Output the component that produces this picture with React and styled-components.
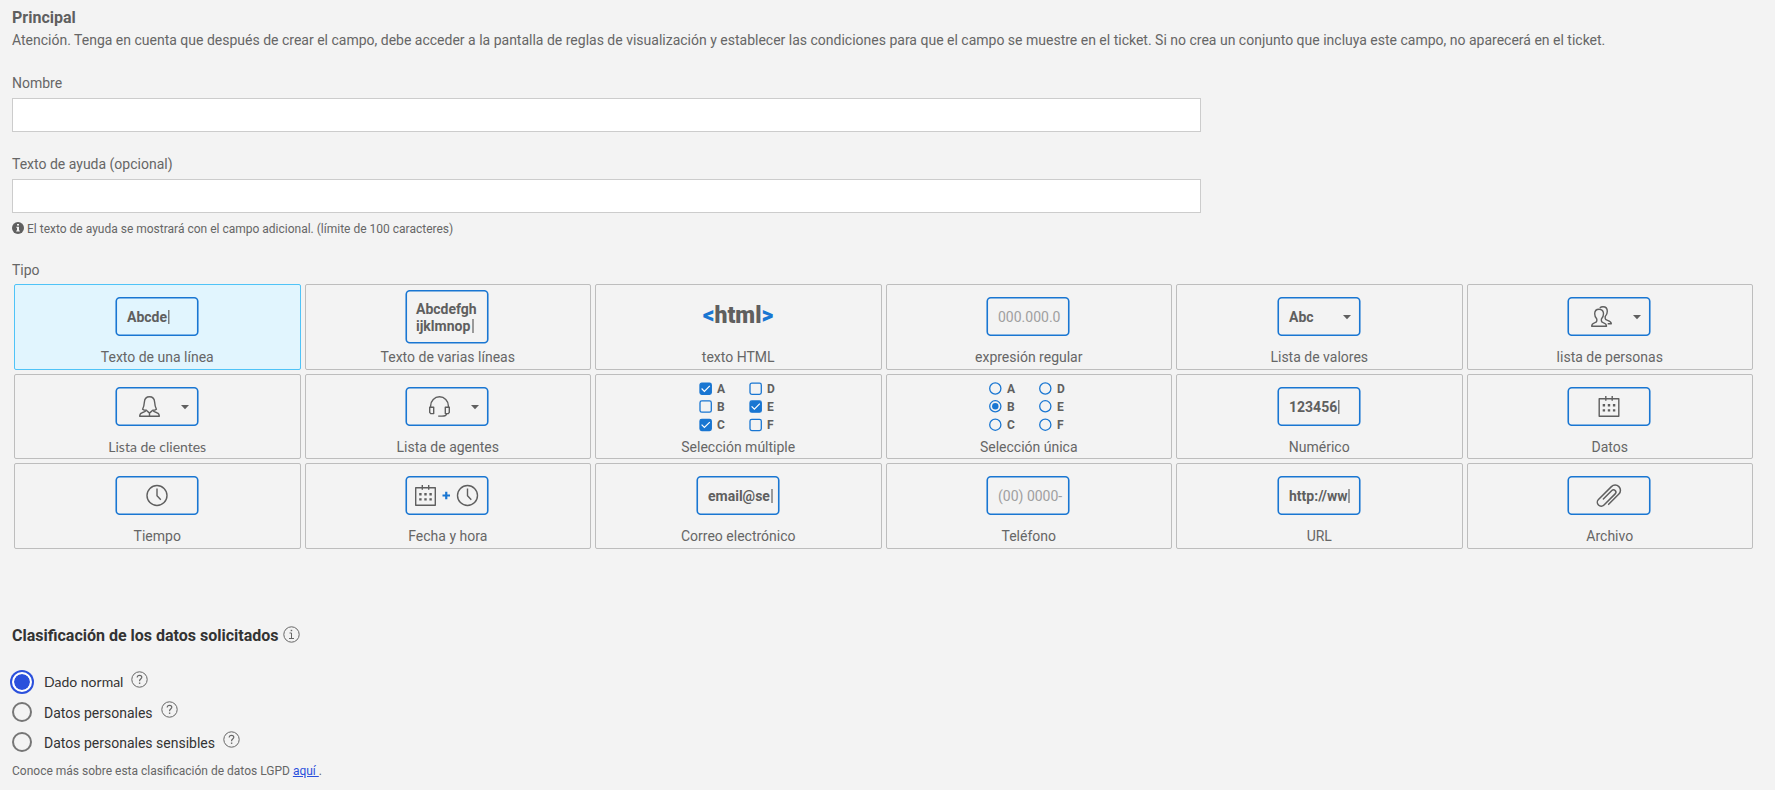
import React, { useState } from "react";
import styled, { createGlobalStyle, css } from "styled-components";

const BLUE = "#1976d2";
const INK = "#5f5f5f";

const GlobalStyle = createGlobalStyle`
  *, *::before, *::after { box-sizing: border-box; }
  body {
    margin: 0;
    background: #f3f3f3;
    color: #666;
    font: 14px/20px Roboto, "Liberation Sans", sans-serif;
  }
  svg { display: block; flex: none; }
`;

const Page = styled.form`
  padding: 8px 20px 10px 12px;
`;

const Heading = styled.h1`
  margin: 0 0 2px;
  font-size: 16px;
  line-height: 20px;
  font-weight: 700;
  color: #5f5f5f;
`;

const Intro = styled.p`
  margin: 0 0 23px;
`;

const Field = styled.div`
  display: flex;
  flex-direction: column;
  gap: 5px;
  margin-bottom: ${(p) => p.$gap}px;
`;

const TextInput = styled.input`
  width: 68.2%;
  height: 34px;
  padding: 6px 10px;
  border: 1px solid #ccc;
  background: #fff;
  color: #555;
  font: inherit;
`;

const Hint = styled.p`
  display: flex;
  align-items: flex-start;
  gap: 3px;
  margin: 0 0 23px;
  font-size: 12px;
  line-height: 16px;
  svg { margin-top: 1px; }
`;

const TypeSection = styled.section`
  margin-bottom: 75px;
`;

const TypeLabel = styled.h2`
  margin: 0 0 4px;
  font-size: 14px;
  line-height: 20px;
  font-weight: 400;
`;

const TypeGrid = styled.div`
  display: grid;
  grid-template-columns: repeat(6, 1fr);
  grid-auto-rows: 1fr;
  gap: 4px;
  min-height: 265px;
  padding: 0 2px;
`;

const TypeCard = styled.button`
  display: flex;
  flex-direction: column;
  align-items: center;
  gap: 3px;
  padding: 5px 0 0;
  border: 1px solid #bdbdbd;
  border-radius: 2px;
  background: transparent;
  color: inherit;
  font: inherit;
  cursor: pointer;
  ${(p) =>
    p.$selected &&
    css`
      border-color: #4fc3f7;
      background: #e1f5fe;
    `}
`;

const CardName = styled.span`
  ${(p) => p.$round && css`font-family: Lato, sans-serif;`}
`;

const Classification = styled.fieldset`
  margin: 0;
  padding: 0;
  border: 0;
  color: #333;
`;

const Legend = styled.legend`
  display: flex;
  align-items: flex-start;
  gap: 4px;
  margin-bottom: 22px;
  padding: 0;
  font-size: 16px;
  line-height: 24px;
  font-weight: 700;
  svg { margin-top: 2px; }
`;

const Options = styled.div`
  display: flex;
  flex-direction: column;
  gap: 6px;
  margin-bottom: 9px;
`;

const Option = styled.div`
  display: flex;
  align-items: center;
  height: 24px;
`;

const OptionLabel = styled.label`
  margin: ${(p) => (p.$round ? 0 : 2)}px 8px 0 12px;
  ${(p) => p.$round && css`font-family: Lato, sans-serif;`}
`;

const Radio = styled.input.attrs({ type: "radio" })`
  appearance: none;
  width: 20px;
  height: 20px;
  margin: 0;
  border: 2px solid #767676;
  border-radius: 50%;
  &:checked {
    border-color: #fff;
    background: #2b50dc padding-box;
    box-shadow: 0 0 0 2px #2b50dc;
  }
`;

const HelpButton = styled.button`
  margin: 0 0 5px;
  padding: 0;
  border: 0;
  background: none;
  color: #666;
`;

const Footnote = styled.p`
  margin: 0;
  font-size: 12px;
  line-height: 16px;
  color: #666;
  a { color: #2b50dc; white-space: pre; }
`;

const SvgText = styled.text`
  font: ${(p) => p.$weight || 700} ${(p) => p.$size || 14}px Roboto, sans-serif;
  fill: ${(p) => p.$fill || INK};
  white-space: pre;
`;

const Art = ({ children }) => (
  <svg width="85" height="54" viewBox="0 0 85 54" fill="none" aria-hidden="true">
    {children}
  </svg>
);

const Frame = ({ tall }) => (
  <rect x="1.25" y={tall ? 0.75 : 7.75} width="81.5" height={tall ? 52 : 37.5} rx="3.5" stroke={BLUE} strokeWidth="1.6" />
);

const Caret = ({ x, y = 20 }) => <path d={`M${x} ${y}v14`} stroke={INK} strokeWidth="1.2" />;

const Typed = ({ text, caret }) => (
  <Art>
    <Frame />
    <SvgText x="12" y="32">{text}</SvgText>
    {caret && <Caret x={caret} />}
  </Art>
);

const Masked = ({ text }) => (
  <Art>
    <Frame />
    <SvgText x="12" y="32" $weight={400} $fill="#a0a0a0">{text}</SvgText>
  </Art>
);

const DropArrow = () => <path d="M66 25h8l-4 4.2z" fill={INK} />;

const Stroke = ({ x, y = 16, children }) => (
  <g transform={`translate(${x} ${y})`} stroke={INK} strokeWidth="1.4" strokeLinejoin="round">
    {children}
  </g>
);

const Clock = ({ x }) => (
  <Stroke x={x}>
    <circle cx="10.5" cy="10.5" r="10" />
    <path d="M10.5 3.5v7.2l3.8 4" />
  </Stroke>
);

const Calendar = ({ x }) => (
  <Stroke x={x}>
    <path d="M.7 2.7h19.6v17.6H.7zM7.3 0v4.8M13.7 0v4.8" />
    <path d="M4.2 9.2h2.4M9.3 9.2h2.4M14.4 9.2h2.4M4.2 14.4h2.4M9.3 14.4h2.4M14.4 14.4h2.4" strokeWidth="2.4" />
  </Stroke>
);

const Person = ({ x }) => (
  <Stroke x={x}>
    <path d="M10.5.7C7 .7 5.6 3 5.4 6c-.2 3-.7 5-1.8 7.2.9.8 2.3 1.1 3.700 1.100-.5 1.300-2.200 1.800-4.400 2.500C1 17.400.7 18.300.7 20.300h19.600c0-2-.3-2.900-2.200-3.500-2.200-.7-3.900-1.200-4.400-2.500 1.400 0 2.800-.3 3.700-1.100C16.300 11 15.800 9 15.600 6 15.400 3 14 .7 10.500.7z" />
    <path d="M7.300 14.300l3.200 2.800 3.200-2.800M10.500 17v3.200" />
  </Stroke>
);

const People = ({ x }) => (
  <Stroke x={x}>
    <path d="M8 3.200c-3 0-4.300 1.900-4.300 4.600 0 2.500.8 4 2.100 5.300v2c0 1-.9 1.300-2.300 1.700C1.300 17.500.7 18 .7 20.300h14.800c0-2.300-.7-2.800-2.900-3.500-1.400-.4-2.200-.7-2.200-1.700v-2c1.300-1.300 2.100-2.800 2.100-5.300 0-2.700-1.300-4.600-4.500-4.600z" />
    <path d="M8.800 1.900C9.700 1 10.800.7 12 .7c3 0 4.300 1.900 4.300 4.600 0 2.500-.8 4-2.100 5.300v2c0 1 .9 1.300 2.300 1.700 2.300.7 3.800 1.200 3.800 3.400h-3.600" />
  </Stroke>
);

const Headset = ({ x }) => (
  <Stroke x={x}>
    <path d="M1.600 11.200V10a8.900 9.200 0 0 1 17.800 0v1.200" />
    <path d="M.7 11.200h4v6.400h-3l-1-1.200zM20.300 11.200h-4v6.400h3l1-1.200z" />
    <path d="M17.600 17.800c-.3 1.600-2 2.300-4.600 2.300H9.200" />
  </Stroke>
);

const Clip = () => (
  <g transform="translate(42.5 27) rotate(45)" stroke={INK} strokeWidth="1.5" strokeLinecap="round">
    <path d="M5.300 6.500V-8a5.300 5.300 0 0 0-10.600 0V10.300a3.900 3.900 0 0 0 7.800 0V-5.500a2.300 2.300 0 0 0-4.700 0V6.500" />
  </g>
);

const Picker = ({ children }) => (
  <Art>
    <Frame />
    {children}
    <DropArrow />
  </Art>
);

const CHOICES = [
  ["A", 3, 8.5], ["B", 3, 26.3], ["C", 3, 44.7],
  ["D", 53, 8.5], ["E", 53, 26.3], ["F", 53, 44.7],
];

const Choices = ({ round, on }) => (
  <Art>
    {CHOICES.map(([name, x, y]) => {
      const active = on.includes(name);
      return (
        <g key={name}>
          {round ? (
            <>
              <circle cx={x + 6.3} cy={y} r="5.6" stroke={BLUE} strokeWidth="1.3" />
              {active && <circle cx={x + 6.3} cy={y} r="3.2" fill={BLUE} />}
            </>
          ) : (
            <>
              <rect x={x + 1} y={y - 5.4} width="11.3" height="11.3" rx="1.8" stroke={BLUE} strokeWidth="1.3" fill={active ? BLUE : "none"} />
              {active && <path d={`M${x + 2.6} ${y}l2.8 2.8 5.400-5.400`} stroke="#fff" strokeWidth="1.2" />}
            </>
          )}
          <SvgText x={x + 18} y={y + 4.3} $size={12}>{name}</SvgText>
        </g>
      );
    })}
  </Art>
);

const TYPES = [
  { name: "Texto de una línea", art: <Typed text="Abcde" caret={53.8} /> },
  {
    name: "Texto de varias líneas",
    art: (
      <Art>
        <Frame tall />
        <SvgText x="11" y="24">Abcdefgh</SvgText>
        <SvgText x="11" y="41">ijklmnop</SvgText>
        <Caret x={68} y={29} />
      </Art>
    ),
  },
  {
    name: "texto HTML",
    art: (
      <Art>
        <SvgText x="42" y="33" $size={23} $weight={900} textAnchor="middle">
          <tspan fill={BLUE}>&lt;</tspan>html<tspan fill={BLUE}>&gt;</tspan>
        </SvgText>
      </Art>
    ),
  },
  { name: "expresión regular", art: <Masked text="000.000.0" /> },
  { name: "Lista de valores", art: <Picker><SvgText x="12" y="32">Abc</SvgText></Picker> },
  { name: "lista de personas", art: <Picker><People x={24} /></Picker> },
  { name: "Lista de clientes", round: true, art: <Picker><Person x={24} /></Picker> },
  { name: "Lista de agentes", art: <Picker><Headset x={24} /></Picker> },
  { name: "Selección múltiple", art: <Choices on="ACE" /> },
  { name: "Selección única", art: <Choices round on="B" /> },
  { name: "Numérico", art: <Typed text="123456" caret={61.8} /> },
  { name: "Datos", art: <Art><Frame /><Calendar x={31.5} /></Art> },
  { name: "Tiempo", art: <Art><Frame /><Clock x={31.5} /></Art> },
  {
    name: "Fecha y hora",
    art: (
      <Art>
        <Frame />
        <Calendar x={10} />
        <path d="M37.5 26.5h7.5M41.25 22.750v7.5" stroke={BLUE} strokeWidth="2.2" />
        <Clock x={52} />
      </Art>
    ),
  },
  { name: "Correo electrónico", art: <Typed text="email@se" caret={76} /> },
  { name: "Teléfono", art: <Masked text="(00) 0000-" /> },
  { name: "URL", art: <Typed text="http://ww" caret={72} /> },
  { name: "Archivo", art: <Art><Frame /><Clip /></Art> },
];

const OPTIONS = [
  { id: "normal", label: "Dado normal", round: true },
  { id: "personal", label: "Datos personales" },
  { id: "sensitive", label: "Datos personales sensibles" },
];

const InfoSolid = () => (
  <svg width="12" height="12" viewBox="0 0 12 12" aria-hidden="true">
    <circle cx="6" cy="6" r="6" fill={INK} />
    <path d="M5 2h2v1.600H5zM4.300 4.800H7v3.800h.8v1H4.200v-1H5V5.800h-.7z" fill="#f3f3f3" />
  </svg>
);

const InfoCircle = () => (
  <svg width="17" height="17" viewBox="0 0 17 17" fill="none" stroke="#666" aria-hidden="true">
    <circle cx="8.5" cy="8.5" r="7.7" />
    <path d="M6.500 7h2v5.500M6 12.500h5" />
    <path d="M7.700 4.500h1.500" strokeWidth="1.4" />
  </svg>
);

const HelpCircle = () => (
  <svg width="17" height="17" viewBox="0 0 17 17" fill="none" stroke="#666" aria-hidden="true">
    <circle cx="8.5" cy="8.5" r="7.7" />
    <path d="M6.200 6.600c0-1.500.9-2.300 2.300-2.300s2.300.8 2.300 2c0 1.700-2.200 1.800-2.200 3.500v.4" strokeWidth="1.2" />
    <path d="M7.900 12.200h1.400" strokeWidth="1.4" />
  </svg>
);

export default function App() {
  const [type, setType] = useState("Texto de una línea");
  const [level, setLevel] = useState("normal");
  return (
    <>
      <GlobalStyle />
      <Page onSubmit={(e) => e.preventDefault()}>
        <Heading>Principal</Heading>
        <Intro>
          Atención. Tenga en cuenta que después de crear el campo, debe acceder a la pantalla de reglas de visualización y
          establecer las condiciones para que el campo se muestre en el ticket. Si no crea un conjunto que incluya este
          campo, no aparecerá en el ticket.
        </Intro>
        <Field $gap={22}>
          <label htmlFor="name">Nombre</label>
          <TextInput id="name" type="text" />
        </Field>
        <Field $gap={8}>
          <label htmlFor="help">Texto de ayuda (opcional)</label>
          <TextInput id="help" type="text" maxLength={100} aria-describedby="help-hint" />
        </Field>
        <Hint id="help-hint">
          <InfoSolid />
          El texto de ayuda se mostrará con el campo adicional. (límite de 100 caracteres)
        </Hint>
        <TypeSection>
          <TypeLabel>Tipo</TypeLabel>
          <TypeGrid>
            {TYPES.map(({ name, art, round }) => (
              <TypeCard
                key={name}
                type="button"
                $selected={type === name}
                aria-pressed={type === name}
                onClick={() => setType(name)}
              >
                {art}
                <CardName $round={round}>{name}</CardName>
              </TypeCard>
            ))}
          </TypeGrid>
        </TypeSection>
        <Classification>
          <Legend>
            Clasificación de los datos solicitados
            <InfoCircle />
          </Legend>
          <Options>
            {OPTIONS.map(({ id, label, round }) => (
              <Option key={id}>
                <Radio id={id} name="level" checked={level === id} onChange={() => setLevel(id)} />
                <OptionLabel htmlFor={id} $round={round}>{label}</OptionLabel>
                <HelpButton type="button" aria-label={`Ayuda: ${label}`}>
                  <HelpCircle />
                </HelpButton>
              </Option>
            ))}
          </Options>
          <Footnote>
            Conoce más sobre esta clasificación de datos LGPD <a href="#lgpd">{"aquí "}</a>.
          </Footnote>
        </Classification>
      </Page>
    </>
  );
}
